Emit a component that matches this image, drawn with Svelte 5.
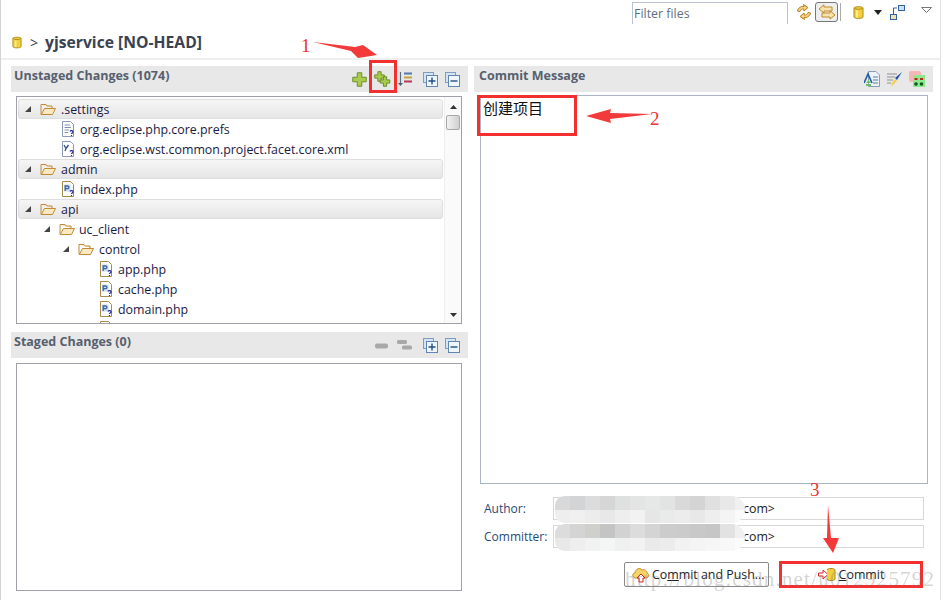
<script>
  const tree = [
    { d: 0, n: '.settings', k: 'folder', top: true },
    { d: 1, n: 'org.eclipse.php.core.prefs', k: 'prefs' },
    { d: 1, n: 'org.eclipse.wst.common.project.facet.core.xml', k: 'xml' },
    { d: 0, n: 'admin', k: 'folder', top: true },
    { d: 1, n: 'index.php', k: 'php' },
    { d: 0, n: 'api', k: 'folder', top: true },
    { d: 1, n: 'uc_client', k: 'folder' },
    { d: 2, n: 'control', k: 'folder' },
    { d: 3, n: 'app.php', k: 'php' },
    { d: 3, n: 'cache.php', k: 'php' },
    { d: 3, n: 'domain.php', k: 'php' },
    { d: 3, n: '', k: 'php' }
  ];
  const a1 = ['#d9d9d9','#d3d4d5','#dcdcdc','#d6d6d6','#dfe0e0','#e4e4e4','#e6e7e7','#e2e3e3','#d9d9d9','#d4d4d4','#e0e0e0','#e8e8e8','#f0f0f0'];
  const a2 = ['#eeeeee','#f0f0f0','#ececec','#e8e8e8','#eeeeee','#f2f2f2','#e6e6e6','#e9eaea','#ececec','#e8e8e8','#eeeeee','#f4f4f4','#fafafa'];
  const c1 = ['#dcdcdc','#d4d4d4','#cfcfcc','#c4c4c4','#d2d2d2','#dcdcdc','#d4d4d4','#cccccc','#cbcbcb','#c8c8c8','#c6c6c6','#e2e2e2','#f0f0f0'];
  const c2 = ['#e8e8e8','#eeeeee','#f2f2f2','#f4f5f5','#f0f0f0','#f2f2f2','#eaeaea','#ececec','#f2f2f2','#f4f4f4','#f6f6f6','#f8f8f8','#fbfbfb'];
</script>

{#snippet cyl(w, h)}
  <svg width={w} height={h} viewBox="0 0 11 14">
    <path d="M1 2.5C1 .8 10 .8 10 2.5V11.5C10 13.4 1 13.4 1 11.5Z" fill="#f2d13c" stroke="#a98a1c"/>
    <path d="M1.5 2.7C3 4.2 8 4.2 9.5 2.7" fill="none" stroke="#a98a1c"/>
    <rect x="3" y="5" width="2" height="7" fill="#fbeb8e"/>
  </svg>
{/snippet}

{#snippet folder()}
  <svg width="16" height="14" viewBox="0 0 16 14">
    <path d="M1 2.5H6L7 4H12V6" fill="#fbe6b8" stroke="#c18a3a"/>
    <path d="M1 2.5V12.5H12.5L15.5 6.5H4.5L1.5 12" fill="#fbe9c2" stroke="#c18a3a"/>
  </svg>
{/snippet}

{#snippet file(k)}
  <svg width="14" height="16" viewBox="0 0 14 16">
    <path d="M1.5 .5H9.5L12.5 3.5V15.5H1.5Z" fill="#fff" stroke={k === 'php' ? '#a88a4a' : '#8d99b5'}/>
    {#if k === 'prefs'}
      <path d="M3.5 4H9M3.5 6.5H10M3.5 9H8M3.5 11.5H7" stroke="#7f8fb0"/>
    {:else if k === 'xml'}
      <path d="M3 4L5 7.5L7.5 4M5 7.5L4 10" fill="none" stroke="#33508f" stroke-width="1.3"/>
    {:else}
      <rect x="3" y="3.5" width="6.5" height="7" fill="#cfdcee"/>
      <path d="M4.2 10V5H7A1.4 1.4 0 0 1 7 7.6H4.2" fill="none" stroke="#3566a8" stroke-width="1.3"/>
    {/if}
    <path d="M9 10.5C9.5 9 12.5 9.5 12 11C11.7 12 10.5 12 10.5 13M10.5 14V15" fill="none" stroke="#2c2c9c" stroke-width="1.2"/>
  </svg>
{/snippet}

{#snippet plus(x, y, s)}
  <path d="M{x - s / 2} {y - s * 1.5}h{s}v{s}h{s}v{s}h{-s}v{s}h{-s}v{-s}h{-s}v{-s}h{s}z" fill="#a9cc4c" stroke="#6d8f2a"/>
{/snippet}

{#snippet expand(minus)}
  <svg width="15" height="15" viewBox="0 0 15 15">
    <rect x=".5" y=".5" width="10" height="10" fill="#d5e4f4" stroke="#7f9dc0"/>
    <rect x="3.5" y="3.5" width="11" height="11" fill="#eef5fc" stroke="#5f86b0"/>
    {#if minus}<path d="M5.5 9H12.5" stroke="#1f4f86" stroke-width="1.4"/>
    {:else}<path d="M5.5 9H12.5M9 5.5V12.5" stroke="#1f4f86" stroke-width="1.4"/>{/if}
  </svg>
{/snippet}

<div class="page">
  <div class="toolbar">
    <div class="filter">Filter files</div>
    <div class="tools">
      <svg class="t-sync" width="16" height="16" viewBox="0 0 16 16">
        <path d="M1.5 7C2 4 5 2 8 2.5L7.5 .5L12 3.5L8 7L7.7 5C6 4.7 4.5 5.5 4 7.5Z" fill="#f5d38a" stroke="#bb7d1c"/>
        <path d="M14.5 9C14 12 11 14 8 13.5L8.5 15.5L4 12.5L8 9L8.3 11C10 11.3 11.5 10.5 12 8.5Z" fill="#f5d38a" stroke="#bb7d1c"/>
      </svg>
      <div class="toggled">
        <svg width="18" height="16" viewBox="0 0 18 16">
          <path d="M1 5L6 .8V3H14V7H6V9Z" fill="#f7e3ad" stroke="#c08a2b"/>
          <path d="M17 11L12 6.8V9H4V13H12V15Z" fill="#f7e3ad" stroke="#c08a2b"/>
        </svg>
      </div>
      <div class="sep"></div>
      <div class="cyl-top">{@render cyl(11, 15)}</div>
      <svg class="drop" width="8" height="5" viewBox="0 0 8 5"><path d="M0 0H8L4 5Z" fill="#222"/></svg>
      <svg width="15" height="15" viewBox="0 0 15 15">
        <rect x="8.5" y=".5" width="6" height="5" fill="#cfe0f2" stroke="#33639c"/>
        <rect x=".5" y="9.5" width="6" height="5" fill="#f1dfae" stroke="#33639c"/>
        <path d="M3.5 9V3H7" fill="none" stroke="#33639c"/>
      </svg>
      <svg class="menu" width="11" height="6" viewBox="0 0 11 6"><path d="M.5 .5H10.5L5.5 5.5Z" fill="#fff" stroke="#777"/></svg>
    </div>
  </div>

  <div class="title">
    {@render cyl(10, 13)}
    <span class="gt">&gt;</span>
    <span class="name">yjservice [NO-HEAD]</span>
  </div>

  <div class="columns">
    <div class="left">
      <section class="unstaged">
        <header>
          <h2>Unstaged Changes (1074)</h2>
          <div class="acts">
            <svg width="15" height="15" viewBox="0 0 15 15">{@render plus(7.5, 7.5, 4.5)}</svg>
            <svg width="17" height="16" viewBox="0 0 17 16">{@render plus(5.5, 5.5, 3.2)}{@render plus(11, 10.5, 3.2)}</svg>
            <svg class="sort" width="15" height="16" viewBox="0 0 15 16">
              <path d="M2.5 1V13" stroke="#5a6f87" stroke-width="1.2"/><path d="M0 12H5L2.5 15Z" fill="#4d5d72"/>
              <path d="M6 2.5H14" stroke="#5578a8" stroke-width="2"/><path d="M6 6.5H14" stroke="#c5a43c" stroke-width="2"/><path d="M6 10.5H14" stroke="#b8365a" stroke-width="2"/>
            </svg>
            {@render expand(false)}
            {@render expand(true)}
          </div>
        </header>
        <div class="box tree">
          <div class="rows">
            {#each tree as r}
              <div class="row" class:top={r.top} class:d1={r.d === 1} class:d2={r.d === 2} class:d3={r.d === 3}>
                {#if r.k === 'folder'}
                  <i class="tw"></i>
                  {@render folder()}
                {:else}
                  {@render file(r.k)}
                {/if}
                <span>{r.n}</span>
              </div>
            {/each}
          </div>
          <div class="scroll">
            <svg width="7" height="4" viewBox="0 0 7 4"><path d="M0 4L3.5 0L7 4Z" fill="#333"/></svg>
            <div class="thumb"></div>
            <svg class="down" width="7" height="4" viewBox="0 0 7 4"><path d="M0 0L3.5 4L7 0Z" fill="#333"/></svg>
          </div>
        </div>
      </section>
      <section class="staged">
        <header>
          <h2>Staged Changes (0)</h2>
          <div class="acts">
            <svg width="15" height="15" viewBox="0 0 15 15"><rect x="1" y="5.5" width="13" height="5" rx="2" fill="#a8a8a8"/></svg>
            <svg class="sort" width="17" height="15" viewBox="0 0 17 15"><rect x="1" y="2" width="10" height="4" rx="1.5" fill="#a8a8a8"/><rect x="6" y="7.5" width="10" height="4" rx="1.5" fill="#a8a8a8"/></svg>
            {@render expand(false)}
            {@render expand(true)}
          </div>
        </header>
        <div class="box empty"></div>
      </section>
    </div>

    <div class="right">
      <header>
        <h2>Commit Message</h2>
        <div class="acts">
          <svg width="16" height="16" viewBox="0 0 16 16">
            <path d="M4.5 .5H12L15.5 4V15.5H4.5Z" fill="#eef2f8" stroke="#8a9bb8"/>
            <path d="M9 6H14M9 9H14M9 12H14" stroke="#5a78a8"/>
            <path d="M0 12L4 3L8 12" fill="none" stroke="#1f5fa0" stroke-width="1.6"/>
            <path d="M2 12H7L4.5 9Z M2 13H7V15H2Z" fill="#6cbc6c"/>
          </svg>
          <svg width="17" height="16" viewBox="0 0 17 16">
            <path d="M1 3H11M1 6H9M1 9H7M1 12H5" stroke="#8f8f8f"/>
            <path d="M16 1L9 7L11 9Z" fill="#1f4fa8"/>
            <path d="M9 8L5 13L6 15L11 10Z" fill="#f4cf55"/>
          </svg>
          <svg width="16" height="16" viewBox="0 0 16 16">
            <rect x="0" y="0" width="12" height="11" rx="2" fill="#f6b6b6"/>
            <rect x="4" y="4" width="12" height="12" fill="#8ee88e"/>
            <path d="M5.5 8H8.5M11 8H14" stroke="#c02020" stroke-width="2"/>
            <circle cx="7" cy="13" r="1.8" fill="#0b5a1a"/><circle cx="12.5" cy="13" r="1.8" fill="#0b5a1a"/>
          </svg>
        </div>
      </header>
      <div class="message">创建项目</div>
      <div class="field">
        <label for="author">Author:</label>
        <div class="input" id="author">
          <span class="val">com&gt;</span>
          <div class="blob">
            {#each [a1, a2] as line}
              <div class="mline">{#each line as c}<b style="background:{c}"></b>{/each}</div>
            {/each}
          </div>
        </div>
      </div>
      <div class="field second">
        <label for="committer">Committer:</label>
        <div class="input" id="committer">
          <span class="val">com&gt;</span>
          <div class="blob">
            {#each [c1, c2] as line}
              <div class="mline">{#each line as c}<b style="background:{c}"></b>{/each}</div>
            {/each}
          </div>
        </div>
      </div>
      <div class="buttons">
        <button class="push">
          <svg width="18" height="18" viewBox="0 0 18 18">
            <path d="M3 12C0 11 0 7 3 7C3 3 8 1 10 4C13 3 15 5 15 7C18 8 17 12 14 12Z" fill="#f7d46a" stroke="#c4912c"/>
            <path d="M9 8L13 12H11V16H7V12H5Z" fill="#fff" stroke="#d82020"/>
          </svg>
          <span>Co<u>m</u>mit and Push...</span>
        </button>
        <button class="commit">
          <svg width="18" height="15" viewBox="0 0 18 15">
            <path d="M.5 6H5V3L10 7.5L5 12V9H.5Z" fill="#fff" stroke="#d82020"/>
            <path d="M9 3C9 1 17 1 17 3V12C17 14 9 14 9 12" fill="#f2d13c" stroke="#a98a1c"/>
          </svg>
          <span><u>C</u>ommit</span>
        </button>
      </div>
    </div>
  </div>

  <svg class="marks" width="945" height="600" viewBox="0 0 945 600">
    <g fill="none" stroke="#f23030" stroke-width="3">
      <rect x="370.5" y="61.5" width="25" height="30"/>
      <rect x="478.5" y="96.5" width="97" height="38"/>
      <rect x="780.5" y="562.5" width="141" height="24"/>
    </g>
    <g fill="#f23a3a">
      <path d="M313 42L355 47L363 45L377 55L358 58L351 51Z"/>
      <path d="M586 116L611 109L610 113L652 114L610 119L611 123Z"/>
      <path d="M828 505L831 538H839L833 553L823 538H827Z"/>
    </g>
  </svg>
  <span class="num n1">1</span>
  <span class="num n2">2</span>
  <span class="num n3">3</span>
  <span class="wm">http://blog.csdn.net/u012925792</span>
</div>

<style>
  :global(body) { margin: 0; background: #fff; }
  .page {
    position: relative;
    box-sizing: border-box;
    width: 941px;
    height: 600px;
    overflow: visible;
    border-left: 1px solid #d4d4d4;
    border-right: 1px solid #e4e4e4;
    font-family: "Open Sans", "Noto Sans CJK SC", sans-serif;
    font-size: 12.4px;
    color: #1d1d3a;
  }
  .toolbar { display: flex; height: 28px; padding-left: 631px; }
  .filter {
    box-sizing: border-box;
    width: 156px;
    height: 22px;
    margin-top: 2px;
    padding: 3px 1px;
    border: 1px solid #b9c2cf;
    border-bottom: 0;
    color: #5f6f7f;
    line-height: 16px;
  }
  .tools { display: flex; align-items: center; height: 24px; margin-left: 8px; gap: 0; }
  .toggled {
    display: flex; align-items: center; justify-content: center;
    box-sizing: border-box;
    width: 23px; height: 20px;
    margin-left: 3px;
    border: 1px solid #777;
    border-radius: 3px;
    background: #eee;
  }
  .sep { width: 1px; height: 18px; margin: 0 12px 0 2px; background: #aaa; }
  .cyl-top { margin-right: 10px; height: 15px; line-height: 0; }
  .drop { margin-right: 8px; }
  .menu { margin-left: 16px; margin-top: -4px; }
  .title {
    display: flex; align-items: center;
    height: 28px;
    padding: 0 0 2px 11px;
    border-bottom: 2px solid #efefef;
    color: #3a4252;
  }
  .gt { margin-left: 8px; font-size: 14px; }
  .name { margin-left: 7px; font-size: 15.7px; font-weight: 700; font-family: "Open Sans", sans-serif; }
  .columns { display: flex; padding-top: 6px; }
  .left { width: 457px; margin-left: 10px; }
  .right { width: 459px; margin-left: 6px; }
  header {
    display: flex; align-items: center; justify-content: space-between;
    box-sizing: border-box;
    height: 26px;
    padding: 0 8px 0 3px;
    background: #e8e8e8;
  }
  .right header { padding-left: 5px; }
  h2 { margin: 0; font-size: 12.5px; font-weight: 700; color: #56606e; line-height: 18px; padding-bottom: 6px; }
  .acts { display: flex; align-items: center; gap: 7px; }
  .right .acts { gap: 6px; }
  .sort { margin-right: 3px; }
  .box {
    box-sizing: border-box;
    width: 446px;
    margin: 4px 0 0 5px;
    border: 1px solid #a0a0a8;
  }
  .tree { display: flex; height: 228px; overflow: hidden; }
  .rows { flex: 1; min-width: 0; padding: 2px 1px 0 1px; overflow: hidden; }
  .row {
    display: flex; align-items: center; gap: 5px;
    box-sizing: border-box;
    height: 20px;
    padding-left: 26px;
    white-space: nowrap;
    color: #1a1a44;
  }
  .row.top {
    padding-left: 6px;
    border: 1px solid #dedede;
    border-radius: 3px;
    background: linear-gradient(#f6f6f6, #e6e6e6);
    gap: 5px;
  }
  .row.d1 { padding-left: 43px; }
  .row.d2 { padding-left: 62px; }
  .row.d3 { padding-left: 81px; }
  .row.d1:has(.tw) { padding-left: 26px; gap: 4px; }
  .row.d2:has(.tw) { padding-left: 45px; gap: 5px; }
  .tw {
    width: 0; height: 0;
    border-left: 6px solid transparent;
    border-bottom: 6px solid #444;
    margin-right: 4px;
  }
  .row.d1 .tw { margin-right: 5px; }
  .scroll {
    display: flex; flex-direction: column; align-items: center;
    width: 17px;
    padding-top: 8px;
    background: #fafafa;
    border-left: 1px solid #eee;
    box-sizing: border-box;
  }
  .thumb {
    box-sizing: border-box;
    width: 14px; height: 15px;
    margin-top: 6px;
    border: 1px solid #a8a8a8;
    border-radius: 2px;
    background: linear-gradient(90deg, #f2f2f2, #cfcfcf);
  }
  .down { margin-top: auto; margin-bottom: 6px; }
  .staged { margin-top: 8px; }
  .empty { height: 228px; margin-top: 5px; }
  .message {
    box-sizing: border-box;
    width: 448px;
    height: 389px;
    margin: 3px 0 0 6px;
    padding: 2px 2px;
    border: 1px solid #a9b5c5;
    font-size: 15px;
    line-height: 20px;
    color: #111;
  }
  .field { display: flex; align-items: center; height: 23px; margin: 13px 0 0 10px; }
  .field.second { margin-top: 5px; }
  label { width: 69px; color: #274a78; font-size: 12px; }
  .input {
    position: relative;
    box-sizing: border-box;
    width: 371px; height: 23px;
    border: 1px solid #d8d8d8;
    line-height: 21px;
    padding-left: 189px;
    color: #222;
  }
  .blob {
    position: absolute; left: 1px; top: -2px;
    width: 190px; height: 27px;
    overflow: hidden;
    border-radius: 10px 14px 14px 10px;
  }
  .mline { display: flex; height: 13.5px; }
  .mline b { flex: 0 0 15px; height: 100%; }
  .buttons { display: flex; margin: 14px 0 0 150px; gap: 9px; }
  button {
    display: flex; align-items: center; justify-content: center;
    box-sizing: border-box;
    height: 25px;
    padding: 0;
    border: 1px solid #8a8a8a;
    border-radius: 2px;
    background: #fff;
    font: inherit;
    color: #222;
  }
  .push { width: 145px; gap: 2px; justify-content: flex-start; padding-left: 7px; }
  .commit { width: 144px; gap: 3px; border: 0; padding-left: 2px; }
  .marks { position: absolute; left: -1px; top: 0; pointer-events: none; }
  .num { position: absolute; font-family: "Liberation Serif", serif; font-size: 19px; line-height: 20px; color: #f23030; }
  .n1 { left: 300px; top: 36px; }
  .n2 { left: 649px; top: 109px; }
  .n3 { left: 809px; top: 480px; }
  .wm {
    position: absolute; left: 624px; top: 566px;
    font-family: "Liberation Serif", serif;
    font-size: 21px; letter-spacing: 1.2px;
    line-height: 26px;
    color: rgba(120, 120, 120, .33);
    white-space: nowrap;
  }
</style>
